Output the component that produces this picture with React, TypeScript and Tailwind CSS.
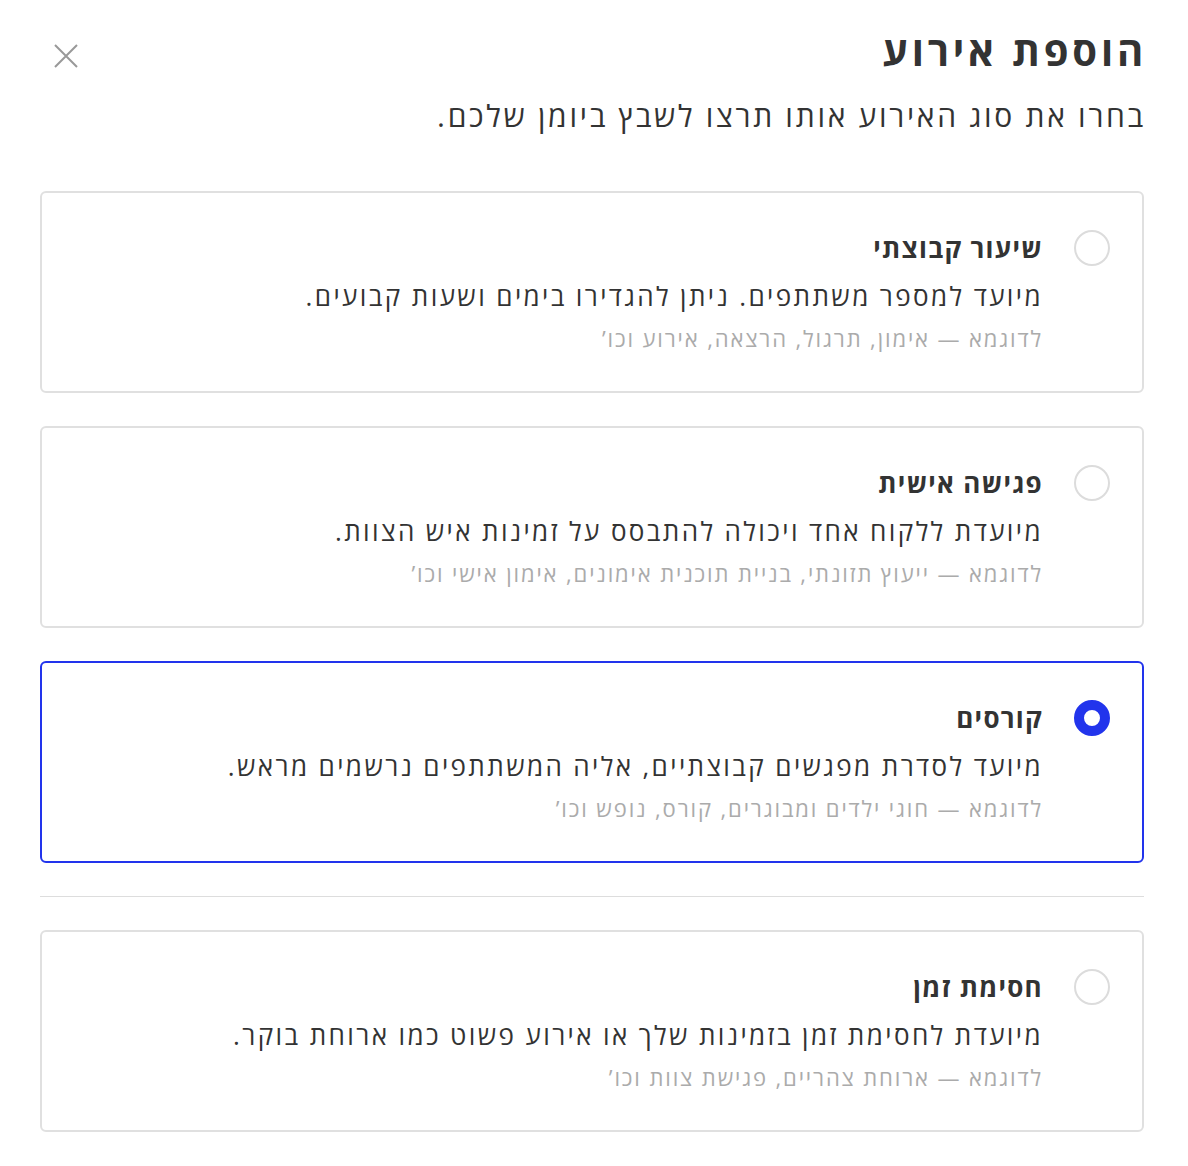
import React from "react";

const options = [
  {
    title: "שיעור קבוצתי",
    desc: "מיועד למספר משתתפים. ניתן להגדירו בימים ושעות קבועים.",
    ex: "לדוגמא — אימון, תרגול, הרצאה, אירוע וכו’",
  },
  {
    title: "פגישה אישית",
    desc: "מיועדת ללקוח אחד ויכולה להתבסס על זמינות איש הצוות.",
    ex: "לדוגמא — ייעוץ תזונתי, בניית תוכנית אימונים, אימון אישי וכו’",
  },
  {
    title: "קורסים",
    desc: "מיועד לסדרת מפגשים קבוצתיים, אליה המשתתפים נרשמים מראש.",
    ex: "לדוגמא — חוגי ילדים ומבוגרים, קורס, נופש וכו’",
  },
];

const last = {
  title: "חסימת זמן",
  desc: "מיועדת לחסימת זמן בזמינות שלך או אירוע פשוט כמו ארוחת בוקר.",
  ex: "לדוגמא — ארוחת צהריים, פגישת צוות וכו’",
};

function Card({
  o,
  selected,
}: {
  o: { title: string; desc: string; ex: string };
  selected?: boolean;
}) {
  return (
    <div
      className={
        selected
          ? "rounded-[6px] border-2 border-[#2234ec] pt-[37px] pb-[38px] pr-[32px] pl-8 flex flex-row gap-[32px]"
          : "rounded-[6px] border-2 border-[#e0e0e0] pt-[37px] pb-[38px] pr-[32px] pl-8 flex flex-row gap-[32px]"
      }
    >
      <div className="h-[36px] flex items-center shrink-0">
        {selected ? (
          <div className="w-[36px] h-[36px] rounded-full border-[10px] border-[#2234ec] bg-white" />
        ) : (
          <div className="w-[36px] h-[36px] rounded-full border-2 border-[#dcdcdc] bg-white" />
        )}
      </div>
      <div className="flex flex-col -mr-[1px]">
        <div className="text-[26px] leading-[36px] font-bold tracking-[0.05em] text-[#333333]">{o.title}</div>
        <div className="text-[26px] leading-[36px] mt-[12px] tracking-[0.092em] text-[#333333]">{o.desc}</div>
        <div className="text-[22px] leading-[30px] mt-[9px] tracking-[0.085em] text-[#ababab]">{o.ex}</div>
      </div>
    </div>
  );
}

export default function App() {
  return (
    <div
      dir="rtl"
      className="bg-white min-h-[1166px] pr-[44px] pl-[40px] pt-[24px] font-['Open_Sans',sans-serif]"
    >
      <div className="flex flex-row justify-between items-start">
        <h1 className="-mr-[3px] text-[40px] leading-[54px] font-bold tracking-[0.095em] text-[#333333]">הוספת אירוע</h1>
        <button className="mt-[20px] ml-[14px] w-[24px] h-[24px] text-[#999999]">
          <svg width="24" height="24" viewBox="0 0 24 24" fill="none" stroke="currentColor" strokeWidth="2">
            <path d="M1 1 L23 23 M23 1 L1 23" />
          </svg>
        </button>
      </div>
      <p className="-mr-[2px] mt-[20px] text-[30px] leading-[36px] tracking-[0.09em] text-[#333333]">
        בחרו את סוג האירוע אותו תרצו לשבץ ביומן שלכם.
      </p>
      <div className="mt-[57px] flex flex-col gap-[33px]">
        {options.map((o, i) => (
          <Card key={i} o={o} selected={i === 2} />
        ))}
        <div className="h-px bg-[#dddddd]" />
        <Card o={last} />
      </div>
    </div>
  );
}
